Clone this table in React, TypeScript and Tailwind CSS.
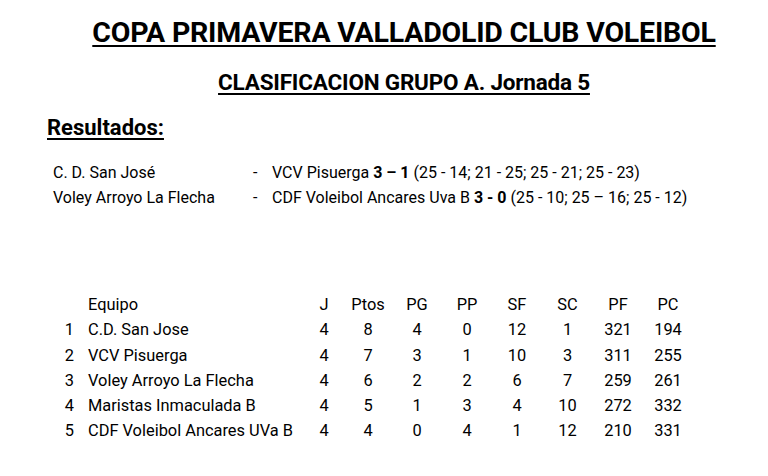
const results = [
  {
    home: 'C. D. San José',
    away: 'VCV Pisuerga',
    score: '3 – 1',
    sets: '(25 - 14; 21 - 25; 25 - 21; 25 - 23)',
  },
  {
    home: 'Voley Arroyo La Flecha',
    away: 'CDF Voleibol Ancares Uva B',
    score: '3 - 0',
    sets: '(25 - 10; 25 – 16; 25 - 12)',
  },
];

const standings = [
  { pos: 1, team: 'C.D. San Jose', stats: [4, 8, 4, 0, 12, 1, 321, 194] },
  { pos: 2, team: 'VCV Pisuerga', stats: [4, 7, 3, 1, 10, 3, 311, 255] },
  { pos: 3, team: 'Voley Arroyo La Flecha', stats: [4, 6, 2, 2, 6, 7, 259, 261] },
  { pos: 4, team: 'Maristas Inmaculada B', stats: [4, 5, 1, 3, 4, 10, 272, 332] },
  { pos: 5, team: 'CDF Voleibol Ancares UVa B', stats: [4, 4, 0, 4, 1, 12, 210, 331] },
];

const headers = ['J', 'Ptos', 'PG', 'PP', 'SF', 'SC', 'PF', 'PC'];

const cols = 'grid grid-cols-[14px_230px_40px_48px_50px_50px_50px_51px_50px_50px]';

export default function App() {
  return (
    <div className="w-[768px] h-[476px] bg-white text-black font-['Roboto',sans-serif] overflow-hidden">
      <div className="pl-10 pt-[17px] flex flex-col items-center">
        <h1 className="text-[28.5px] leading-[32px] font-bold underline decoration-2 underline-offset-[3px] tracking-[-0.2px]">
          COPA PRIMAVERA VALLADOLID CLUB VOLEIBOL
        </h1>
        <h2 className="mt-5 text-[22.5px] leading-[26px] font-bold underline decoration-[1.5px] underline-offset-[3px] tracking-[-0.2px]">
          CLASIFICACION GRUPO A. Jornada 5
        </h2>
      </div>

      <div className="pl-[47px] mt-[21px]">
        <h3 className="text-[22px] leading-[24px] font-bold underline decoration-[1.5px] underline-offset-[3px]">
          Resultados:
        </h3>
      </div>

      <div className="pl-[53px] mt-5 text-[16px] leading-[25px]">
        {results.map((r) => (
          <div key={r.home} className="flex">
            <span className="w-[200px]">{r.home}</span>
            <span className="w-[19px]">-</span>
            <span>
              {r.away} <b>{r.score}</b> {r.sets}
            </span>
          </div>
        ))}
      </div>

      <div className="pl-[60px] mt-[82px] text-[16.4px] leading-[25.3px]">
        <div className={cols}>
          <span />
          <span className="pl-[14px]">Equipo</span>
          {headers.map((h) => (
            <span key={h} className="text-center">
              {h}
            </span>
          ))}
        </div>
        {standings.map((s) => (
          <div key={s.pos} className={cols}>
            <span className="text-right">{s.pos}</span>
            <span className="pl-[14px]">{s.team}</span>
            {s.stats.map((v, i) => (
              <span key={i} className="text-center">
                {v}
              </span>
            ))}
          </div>
        ))}
      </div>
    </div>
  );
}
